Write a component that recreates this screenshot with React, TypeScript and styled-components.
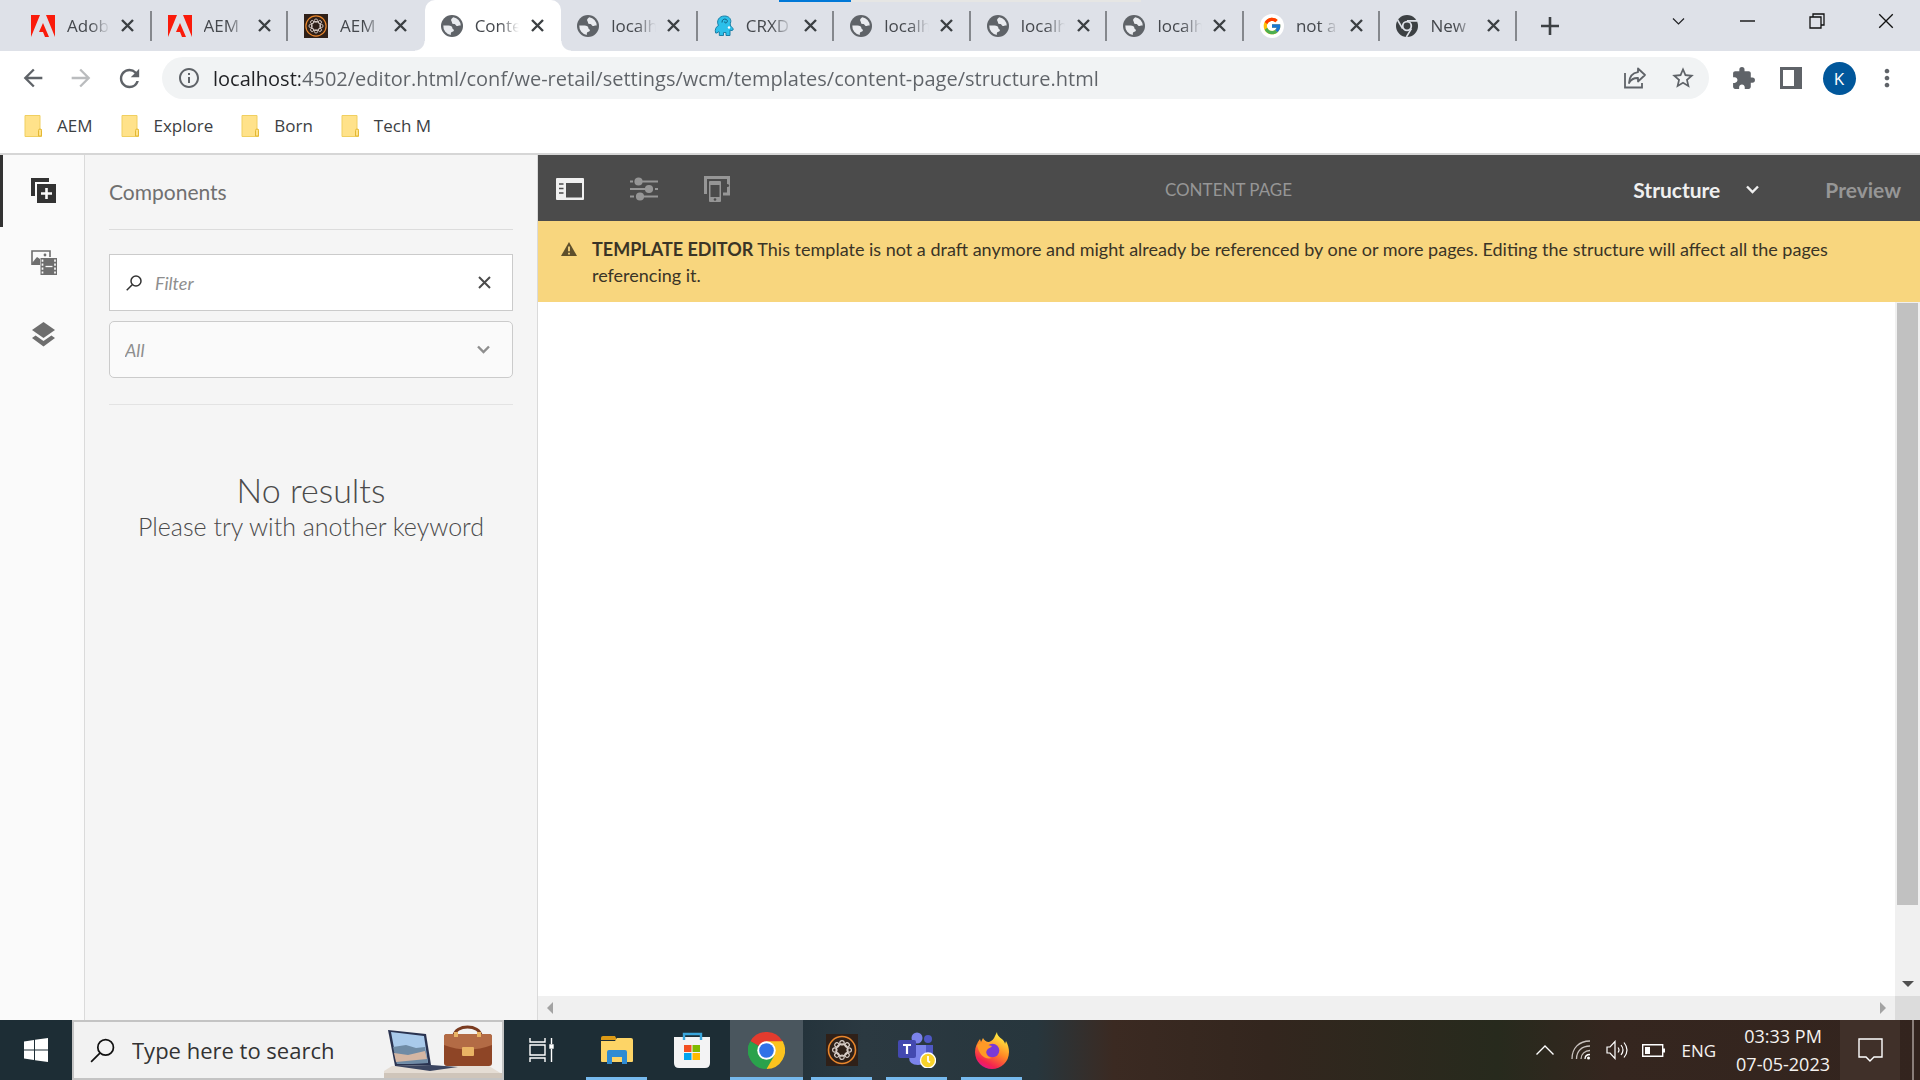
import React from "react";
import styled, { createGlobalStyle, css } from "styled-components";
import { MdExtension, MdMoreVert, MdStarOutline, MdInfoOutline, MdRefresh, MdArrowBack, MdArrowForward } from "react-icons/md";
import { FcGoogle } from "react-icons/fc";

const uiFont = `"Open Sans", "Noto Sans", sans-serif`;
const pageFont = `Lato, "Open Sans", sans-serif`;

const GlobalStyle = createGlobalStyle`
  *, *::before, *::after { box-sizing: border-box; }
  body { margin: 0; font-family: ${uiFont}; background: #fff; }
  button, input, select { font: inherit; color: inherit; margin: 0; }
  button { padding: 0; border: 0; background: none; cursor: pointer; }
  input:focus, select:focus { outline: none; }
  svg { display: block; flex: none; }
`;

const Screen = styled.div`
  display: flex;
  flex-direction: column;
  height: 100vh;
  overflow: hidden;
`;

/* ---------- Browser chrome ---------- */

const TabStrip = styled.header`
  position: relative;
  display: flex;
  flex: none;
  height: 51px;
  padding-left: 15px;
  background: #dee1e8;
`;

const LoadBar = styled.div`
  position: absolute;
  top: 0;
  left: 779px;
  width: 362px;
  height: 2px;
  background: linear-gradient(to right, #0078d7 72px, #e6e6e4 72px);
`;

const TabList = styled.nav`
  display: flex;
  flex: 0 1 1502px;
  min-width: 0;
`;

const Tab = styled.div<{ $active?: boolean; $divider?: boolean }>`
  position: relative;
  display: flex;
  flex: 1 1 0;
  align-items: center;
  min-width: 0;
  padding: 0 12px 0 16px;
  color: #45484d;
  ${(p) =>
    p.$divider &&
    css`
      background: linear-gradient(#85888d, #85888d) right center / 2px 30px no-repeat;
    `}
  ${(p) =>
    p.$active &&
    css`
      background: #fff;
      border-radius: 10px 10px 0 0;
      &::before,
      &::after {
        content: "";
        position: absolute;
        bottom: 0;
        width: 10px;
        height: 10px;
      }
      &::before {
        right: 100%;
        background: radial-gradient(circle at 0 0, transparent 9px, #fff 10px);
      }
      &::after {
        left: 100%;
        background: radial-gradient(circle at 100% 0, transparent 9px, #fff 10px);
      }
    `}
`;

const TabButton = styled.button`
  display: flex;
  flex: 1;
  align-items: center;
  gap: 12px;
  min-width: 0;
  text-align: left;
`;

const TabTitle = styled.span`
  flex: 1;
  overflow: hidden;
  font-size: 17px;
  line-height: 24px;
  white-space: nowrap;
  mask-image: linear-gradient(to right, #000 55%, transparent 100%);
`;

const CloseTab = styled.button`
  display: flex;
  align-items: center;
  justify-content: center;
  width: 24px;
  height: 24px;
  margin-left: 6px;
`;

const NewTab = styled.button`
  display: flex;
  align-items: center;
  justify-content: center;
  width: 66px;
`;

const WindowButtons = styled.div`
  display: flex;
  margin-left: auto;
  height: 42px;
`;

const WindowButton = styled.button`
  display: flex;
  align-items: center;
  justify-content: center;
  width: 69px;
`;

const AddressRow = styled.div`
  display: flex;
  flex: none;
  align-items: center;
  height: 54px;
  padding: 0 9px;
  color: #5f6368;
`;

const NavButton = styled.button`
  display: flex;
  align-items: center;
  justify-content: center;
  width: 48px;
  height: 42px;
  color: #5f6368;
  &:disabled {
    color: #babcbe;
  }
`;

const AddressBar = styled.form`
  display: flex;
  flex: 1;
  align-items: center;
  height: 42px;
  margin: 0 10px 0 9px;
  padding: 0 2px 0 15px;
  border-radius: 21px;
  background: #f1f3f4;
`;

const AddressInput = styled.input`
  flex: 1;
  min-width: 0;
  height: 34px;
  padding: 0;
  border: 0;
  margin-left: 12px;
  font-size: 20px;
  background: linear-gradient(to right, #202124 87px, #5f6368 87px);
  background-clip: text;
  -webkit-text-fill-color: transparent;
`;

const Avatar = styled.span`
  display: flex;
  align-items: center;
  justify-content: center;
  width: 33px;
  height: 33px;
  border-radius: 50%;
  background: #01579b;
  color: #fff;
  font-size: 17px;
`;

const Bookmarks = styled.nav`
  display: flex;
  flex: none;
  align-items: center;
  gap: 28px;
  height: 50px;
  padding: 0 24px 6px;
  border-bottom: 2px solid #d6d6d6;
`;

const Bookmark = styled.a`
  display: flex;
  align-items: center;
  gap: 15px;
  color: #3c4043;
  font-size: 17px;
  line-height: 24px;
  text-decoration: none;
`;

/* ---------- Template editor ---------- */

const Editor = styled.main`
  display: flex;
  flex: 1;
  min-height: 0;
  font-family: ${pageFont};
`;

const Rail = styled.nav`
  display: flex;
  flex: none;
  flex-direction: column;
  width: 85px;
  border-right: 1px solid #dadada;
  background: #fafafa;
`;

const RailButton = styled.button<{ $active?: boolean }>`
  display: flex;
  align-items: center;
  justify-content: center;
  height: 72px;
  padding-bottom: 2px;
  border-left: 3px solid ${(p) => (p.$active ? "#323232" : "transparent")};
  color: ${(p) => (p.$active ? "#323232" : "#6e6e6e")};
`;

const SidePanel = styled.aside`
  flex: none;
  width: 453px;
  padding: 0 24px;
  border-right: 1px solid #dadada;
  background: #f5f5f5;
`;

const PanelTitle = styled.h1`
  margin: 0 0 24px;
  border-bottom: 1px solid #dcdcdc;
  color: #707070;
  font-size: 21px;
  font-weight: 400;
  line-height: 74px;
`;

const FilterBox = styled.label`
  display: flex;
  align-items: center;
  height: 57px;
  padding: 0 16px;
  border: 1px solid #cbcbcb;
  background: #fff;
`;

const FilterInput = styled.input`
  flex: 1;
  min-width: 0;
  height: 40px;
  padding: 0;
  border: 0;
  margin-left: 13px;
  background: none;
  font-size: 18px;
  &::placeholder {
    color: #8e8e8e;
    font-style: italic;
    opacity: 1;
  }
`;

const ClearButton = styled.button`
  display: flex;
  align-items: center;
  justify-content: center;
  width: 24px;
  height: 24px;
`;

const SelectBox = styled.label`
  display: flex;
  align-items: center;
  height: 57px;
  margin: 10px 0 26px;
  padding-right: 17px;
  border: 1px solid #cbcbcb;
  border-radius: 5px;
  background: #fafafa;
`;

const GroupSelect = styled.select`
  flex: 1;
  height: 100%;
  padding: 0 0 0 15px;
  border: 0;
  appearance: none;
  background: none;
  color: #8e8e8e;
  font-size: 18px;
  font-style: italic;
`;

const Results = styled.section`
  padding-top: 63px;
  border-top: 1px solid #e3e3e3;
  color: #4b4b4b;
  font-weight: 300;
  text-align: center;
`;

const ResultsTitle = styled.h2`
  margin: 0;
  font-size: 34px;
  font-weight: 300;
  line-height: 44px;
`;

const ResultsHint = styled.p`
  margin: 0;
  font-size: 25px;
  line-height: 28px;
`;

const Workspace = styled.section`
  display: flex;
  flex: 1;
  flex-direction: column;
  min-width: 0;
`;

const EditorBar = styled.div`
  display: grid;
  flex: none;
  grid-template-columns: 1fr auto 1fr;
  align-items: center;
  height: 66px;
  padding: 2px 19px 0 18px;
  background: #4b4b4b;
`;

const BarGroup = styled.div<{ $end?: boolean }>`
  display: flex;
  align-items: center;
  justify-content: ${(p) => (p.$end ? "flex-end" : "flex-start")};
  gap: ${(p) => (p.$end ? "66px" : "46px")};
`;

const BarButton = styled.button<{ $active?: boolean }>`
  display: flex;
  align-items: center;
  gap: 26px;
  color: ${(p) => (p.$active ? "#f0f0f0" : "#969696")};
  font-size: 21px;
  font-weight: 700;
`;

const PageTitle = styled.div`
  color: #969696;
  font-size: 17px;
`;

const Notice = styled.div`
  display: flex;
  flex: none;
  gap: 15px;
  padding: 15px 80px 14px 23px;
  background: #f8d67e;
  color: #3a3426;
`;

const NoticeIcon = styled.span`
  display: flex;
  align-items: center;
  height: 26px;
`;

const NoticeText = styled.p`
  margin: 0;
  font-size: 18px;
  line-height: 26px;
`;

const Canvas = styled.div`
  display: grid;
  flex: 1;
  grid-template: 1fr 24px / 1fr 25px;
  min-height: 0;
  background: #fff;
`;

const VerticalTrack = styled.div`
  display: flex;
  flex-direction: column;
  grid-column: 2;
  align-items: center;
  padding: 1px 2px 0;
  background: #f0f0f0;
`;

const VerticalRange = styled.div`
  flex: 1;
  width: 100%;
`;

const Thumb = styled.div`
  height: 90%;
  background: #c1c1c1;
`;

const ScrollButton = styled.button`
  display: flex;
  align-items: center;
  justify-content: center;
  width: 24px;
  height: 24px;
`;

const HorizontalTrack = styled.div`
  display: flex;
  grid-column: 1;
  justify-content: space-between;
  background: #f0f0f0;
`;

const Corner = styled.div`
  background: #dcdcdc;
`;

/* ---------- Taskbar ---------- */

const Taskbar = styled.footer`
  display: flex;
  flex: none;
  height: 60px;
  background: linear-gradient(
    to right,
    #1d2d35 0%,
    #1d2d35 38%,
    #2b3941 45%,
    #27363d 54%,
    #3b2a22 58%,
    #33261e 66%,
    #272a1d 78%,
    #35261f 84%,
    #33241e 100%
  );
  color: #f5f2f0;
`;

const StartButton = styled.button`
  display: flex;
  align-items: center;
  justify-content: center;
  width: 72px;
`;

const SearchBox = styled.label`
  display: flex;
  align-items: center;
  width: 432px;
  padding-left: 16px;
  border: 2px solid #c4c4c4;
  background: #f2f2f2;
`;

const SearchInput = styled.input`
  flex: 1;
  min-width: 0;
  height: 40px;
  padding: 0;
  border: 0;
  margin-left: 17px;
  background: none;
  font-size: 22px;
  &::placeholder {
    color: #333;
    opacity: 1;
  }
`;

const AppButton = styled.button<{ $state?: "open" | "active" }>`
  display: flex;
  align-items: center;
  justify-content: center;
  width: 75px;
  padding: 0;
  background: ${(p) =>
    p.$state === "active"
      ? "linear-gradient(#76b9ed, #76b9ed) center bottom / 73px 3px no-repeat, linear-gradient(#4a565e, #4a565e) center / 73px 100% no-repeat"
      : p.$state === "open"
        ? "linear-gradient(#76b9ed, #76b9ed) center bottom / 61px 3px no-repeat"
        : "none"};
`;

const Tray = styled.div`
  display: flex;
  align-items: center;
  margin-left: auto;
`;

const TrayButton = styled.button`
  display: flex;
  align-items: center;
  justify-content: center;
  width: 36px;
  height: 60px;
`;

const Language = styled.button`
  margin: 0 20px 0 10px;
  font-size: 17px;
`;

const Clock = styled.button`
  margin-right: 10px;
  font-size: 18px;
  line-height: 28px;
  text-align: center;
  white-space: pre-line;
`;

const NoticeCenter = styled.button`
  display: flex;
  align-items: center;
  justify-content: center;
  width: 60px;
  height: 60px;
  background: #403029;
`;

const ShowDesktop = styled.button`
  width: 8px;
  height: 60px;
  margin-left: 12px;
  border-left: 2px solid #8a7e79;
`;

/* ---------- Icons ---------- */

const Cross = ({ size = 13, color = "#3c4043", width = 2.4 }) => (
  <svg width={size} height={size} viewBox="0 0 13 13" aria-hidden>
    <path d="M1 1 12 12M12 1 1 12" stroke={color} strokeWidth={width} fill="none" />
  </svg>
);

const AdobeIcon = () => (
  <svg width="24" height="22" viewBox="0 0 24 22" aria-hidden>
    <path d="M0 0h9L0 22zM15 0h9v22zM12 8l6 14h-4l-2-5H8z" fill="#fa1b0b" />
  </svg>
);

const AemIcon = ({ size = 24 }) => (
  <svg width={size} height={size} viewBox="0 0 32 32" aria-hidden>
    <rect width="32" height="32" fill="#2f2018" />
    <circle cx="16" cy="16" r="13.5" fill="none" stroke="#e8862c" strokeWidth="1.6" />
    <circle cx="16" cy="16" r="6" fill="none" stroke="#d9cec8" strokeWidth="1.3" />
    {[0, 45, 90, 135, 180, 225, 270, 315].map((a) => (
      <circle key={a} cx="16" cy="8.8" r="2.2" fill="none" stroke="#d9cec8" strokeWidth="1.2" transform={`rotate(${a} 16 16)`} />
    ))}
  </svg>
);

const GlobeIcon = () => (
  <svg width="22" height="22" viewBox="0 0 22 22" aria-hidden>
    <circle cx="11" cy="11" r="11" fill="#5f6368" />
    <path
      d="M12.4 2.2c-1 .7-2.3 1.5-2.3 2.9 0 1.3 1.1 1.5.9 2.6-.2 1.300 1.500 1 2.600 1.300 1.200.3 1 2 2.400 2 1.200 0 2-.9 3.700-.5a8.800 8.800 0 0 0-7.300-8.300z"
      fill="#e9ebef"
    />
    <path
      d="M2.300 10.500h5.200c2.400 0 3.900 1 3.900 2.800 0 1.200 1.500.6 1.500 1.900 0 1.700-2.700 1.300-3 2.700-.2.800-.1 1.600 0 2A8.900 8.900 0 0 1 2.300 10.500z"
      fill="#e9ebef"
    />
  </svg>
);

const CrxIcon = () => (
  <svg width="20" height="22" viewBox="0 0 20 22" aria-hidden>
    <path
      d="M4.500 10.500C2 6 5 1 10.500 1c4 0 6.500 2.500 6.300 5.500-.1 1.500-.8 2.300-.5 3.500.5 1.800 2.900 2.800 2.900 4.300 0 1.200-2 1.700-3.200.7v5.500h-4v-3H9.500v3H5.300V17l-1.300-.2-.8 1.200H1.600c-1-3.500.4-6.300 2.900-7.500z"
      fill="#2cc0ea"
      stroke="#1a7fa6"
      strokeWidth="1"
    />
    <path d="M8 7.500C7.800 4.800 10 3.500 12 4.300c2 .9 1.600 3.600-.4 3.600-1.100 0-1.300-1.300-.4-1.700" stroke="#135f80" strokeWidth="1" fill="none" />
    <circle cx="15" cy="12.500" r="1.200" fill="#fff" />
  </svg>
);

const GoogleIcon = () => (
  <svg width="24" height="24" viewBox="0 0 24 24" aria-hidden>
    <circle cx="12" cy="12" r="12" fill="#fff" />
    <FcGoogle x={2} y={2} size={20} />
  </svg>
);

const ChromeMono = () => (
  <svg width="22" height="22" viewBox="0 0 22 22" aria-hidden>
    <circle cx="11" cy="11" r="11" fill="#3c4043" />
    <circle cx="11" cy="11" r="4.300" fill="#3c4043" stroke="#dee1e8" strokeWidth="1.800" />
    <path d="M11 5.900h10M6.600 13.600 1.600 5M15.400 13.600l-5 8.400" stroke="#dee1e8" strokeWidth="1.600" />
  </svg>
);

const ChromeIcon = () => (
  <svg width="37" height="37" viewBox="0 0 48 48" aria-hidden>
    <path d="M24 24 3.200 12A24 24 0 0 1 44.800 12z" fill="#e33b2e" />
    <path d="M24 24 44.800 12A24 24 0 0 1 24 48z" fill="#fcc31e" />
    <path d="M24 24v24A24 24 0 0 1 3.200 12z" fill="#2aa24c" />
    <path d="M24 12h20.800L46 14 34 30 24 48l0-12z" fill="#fcc31e" />
    <path d="M3.200 12 13.600 30l10 6 .4 12A24 24 0 0 1 3.200 12z" fill="#2aa24c" />
    <path d="m34.400 30-10.400 18-5-12z" fill="#2aa24c" />
    <circle cx="24" cy="24" r="12" fill="#fff" />
    <circle cx="24" cy="24" r="9.500" fill="#2f72e8" />
  </svg>
);

const FolderIcon = () => (
  <svg width="18" height="22" viewBox="0 0 18 22" aria-hidden>
    <path d="M1 .5h15v14h1.500v7H1z" fill="#ffe28a" stroke="#f0cf60" />
    <path d="M14.500 21v-5.500q0-1.500 1.500-1.500t1.500 1.500V21z" fill="#ffe28a" stroke="#e3b834" />
  </svg>
);

const ShareIcon = () => (
  <svg width="24" height="24" viewBox="0 0 24 24" fill="none" stroke="#5f6368" strokeWidth="1.800" aria-hidden>
    <path d="M2 7v14.500h17V17" />
    <path d="M15 2.500 22 9l-7 6.500V12c-4.500-.2-7 1.300-9 5 .3-6 3.500-10 9-10.800z" strokeLinejoin="round" />
  </svg>
);

const ComponentsIcon = () => (
  <svg width="25" height="25" viewBox="0 0 25 25" aria-hidden>
    <path d="M0 0h18v4H4v14H0z" fill="currentColor" />
    <path d="M6 6h19v19H6z" fill="currentColor" />
    <path d="M15.500 10v11M10 15.500h11" stroke="#fafafa" strokeWidth="2.600" />
  </svg>
);

const AssetsIcon = () => (
  <svg width="26" height="25" viewBox="0 0 26 25" aria-hidden>
    <path d="M1 15V1h18v6" stroke="currentColor" strokeWidth="1.600" fill="none" />
    <path d="m1 13 5-6 3 2v6H1z" fill="currentColor" />
    <circle cx="14" cy="5" r="1.400" fill="currentColor" />
    <path d="M9.500 8H26v17H9.500z" fill="currentColor" />
    <path d="M11.500 9.500v14M24 9.500v14" stroke="#fafafa" strokeWidth="1.700" strokeDasharray="2.200 1.800" />
    <path d="M14.500 16.500h7" stroke="#fafafa" strokeWidth="1.300" />
  </svg>
);

const LayersIcon = () => (
  <svg width="23" height="25" viewBox="0 0 23 25" fill="currentColor" aria-hidden>
    <path d="m11.500 0 11.500 8-11.500 8L0 8z" />
    <path d="m3.600 13.500 7.900 5.500 7.900-5.500L23 16l-11.500 8.500L0 16z" />
  </svg>
);

const Lens = ({ size = 16, color = "#323232", width = 1.500 }) => (
  <svg width={size} height={size} viewBox="0 0 16 16" fill="none" stroke={color} strokeWidth={width} aria-hidden>
    <circle cx="10" cy="6" r="5" />
    <path d="M6.500 9.500.7 15.300" />
  </svg>
);

const Chevron = ({ width = 13, stroke = 2.400, color = "currentColor" }) => (
  <svg width={width} height="9" viewBox="0 0 13 9" fill="none" stroke={color} strokeWidth={stroke} aria-hidden>
    <path d="M1 1.500 6.500 7 12 1.500" />
  </svg>
);

const PanelIcon = () => (
  <svg width="28" height="22" viewBox="0 0 28 22" aria-hidden>
    <rect width="28" height="22" rx="1" fill="#f0f0f0" />
    <path d="M10 5h16v14.500H10z" fill="#4b4b4b" />
    <path d="M3 6h4.500M3 10.500h4.500M3 15h4.500" stroke="#4b4b4b" strokeWidth="1.500" />
  </svg>
);

const SlidersIcon = () => (
  <svg width="28" height="24" viewBox="0 0 28 24" stroke="#969696" strokeWidth="1.800" fill="#969696" aria-hidden>
    <path d="M0 4.500h3M8 4.500h20M0 12h19M25 12h3M0 19.500h4M10 19.500h18" />
    <circle cx="8.500" cy="4.500" r="3.200" />
    <circle cx="19" cy="12" r="3.200" />
    <circle cx="10" cy="19.500" r="3.200" />
  </svg>
);

const DevicesIcon = () => (
  <svg width="26" height="26" viewBox="0 0 26 26" aria-hidden>
    <path d="M1.500 18V1.500h23V18H19" stroke="#969696" strokeWidth="3" fill="none" />
    <path d="M5 6q0-1 1-1h10q1 0 1 1v19q0 1-1 1H6q-1 0-1-1z" fill="#969696" />
    <path d="M6.500 9h9v12h-9z" fill="#4b4b4b" />
    <circle cx="11" cy="23.500" r="1.300" fill="#4b4b4b" />
    <circle cx="23.500" cy="9.500" r="1.600" fill="#4b4b4b" />
  </svg>
);

const AlertIcon = () => (
  <svg width="16" height="14" viewBox="0 0 16 14" aria-hidden>
    <path d="M8 0 16 14H0z" fill="#5e4f2b" />
    <path d="M8 4.500v4.700M8 10.700v1.700" stroke="#f8d67e" strokeWidth="1.800" />
  </svg>
);

const WindowsIcon = () => (
  <svg width="24" height="24" viewBox="0 0 24 24" fill="#fff" aria-hidden>
    <path d="M0 3.400 10 2v9.500H0zM11 1.800 24 0v11.500H11zM0 12.500h10V22L0 20.600zM11 12.500h13V24l-13-1.800z" />
  </svg>
);

const LaptopCaseArt = () => (
  <svg width="118" height="56" viewBox="0 0 118 56" aria-hidden>
    <path d="M8 44h97l13 8v4H0V49z" fill="#e5ddd4" />
    <path d="M0 51h118v5H0z" fill="#cfc5ba" />
    <path d="m4 8 38 4 5 31-36 1z" fill="#2a3350" />
    <path d="m7 10 33 4 4 27-31 1z" fill="#a9caeb" />
    <path d="m9 25 13-2 10 3 9-1 3 16-31 1z" fill="#6f8ba5" />
    <path d="m10 31 14 2 17-4 2 8-31 3z" fill="#d4b6a3" />
    <path d="m11 44 36-1 27 2-28 4z" fill="#3b4560" />
    <path d="M70 14c1-12 26-12 27 0" stroke="#7a3b20" strokeWidth="3" fill="none" />
    <rect x="60" y="12" width="48" height="32" rx="3" fill="#8e4526" />
    <path d="M60 15q0-3 3-3h42q3 0 3 3v8q-24 9-48 0z" fill="#b36b45" />
    <rect x="78" y="25" width="12" height="9" rx="1" fill="#e9b364" />
    <path d="M70 10h4v5h-4zM93 10h4v5h-4z" fill="#e9b364" />
  </svg>
);

const TaskViewIcon = () => (
  <svg width="25" height="24" viewBox="0 0 25 24" fill="none" stroke="#fff" strokeWidth="1.400" aria-hidden>
    <path d="M1 0v4h15V0M1 24v-4h15v4M1 7h15v10H1zM22.500 0v6M22.500 11v13" />
    <path d="M21 7h3v3h-3z" fill="#fff" />
  </svg>
);

const ExplorerIcon = () => (
  <svg width="32" height="28" viewBox="0 0 32 28" aria-hidden>
    <path d="M0 2q0-2 2-2h12l2 4H0z" fill="#dc9a16" />
    <path d="M0 5h14l2-3h14q2 0 2 2v21q0 1-1 1H1q-1 0-1-1z" fill="#fdd466" />
    <path d="M6 28V16q0-2 2-2h16q2 0 2 2v12h-5v-7H11v7z" fill="#2f8bd3" />
  </svg>
);

const StoreIcon = () => (
  <svg width="36" height="36" viewBox="0 0 36 36" aria-hidden>
    <path d="M10 8V2h17v6" stroke="#3aa6dc" strokeWidth="2.400" fill="none" />
    <path d="M0 5h36v26q0 5-5 5H5q-5 0-5-5z" fill="#f3f3f4" />
    <path d="M10 5v3M27 5v3" stroke="#3aa6dc" strokeWidth="2.400" />
    <path d="M10 13h7.500v7H10z" fill="#f25022" />
    <path d="M18.500 13H26v7h-7.500z" fill="#7fba00" />
    <path d="M10 21h7.500v7H10z" fill="#00a4ef" />
    <path d="M18.500 21H26v7h-7.500z" fill="#ffb900" />
  </svg>
);

const TeamsIcon = () => (
  <svg width="38" height="36" viewBox="0 0 38 36" aria-hidden>
    <circle cx="30" cy="7" r="4" fill="#4f58c4" />
    <circle cx="19" cy="6" r="5.500" fill="#7b83eb" />
    <path d="M25 13h10v10q0 5-5 6h-5z" fill="#4f58c4" />
    <path d="M11 13h17v12q0 8-8 8-9 0-9-8z" fill="#7b83eb" />
    <rect y="8" width="18" height="18" rx="2" fill="#4349b0" />
    <path d="M5 13h8M9 13v9" stroke="#fff" strokeWidth="2.200" />
    <circle cx="30" cy="28.500" r="7.500" fill="#f8d22a" stroke="#fff" strokeWidth="1.300" />
    <path d="M30 24v5l2 1.500" stroke="#fff" strokeWidth="1.800" fill="none" />
  </svg>
);

const FirefoxIcon = () => (
  <svg width="34" height="37" viewBox="0 0 34 37" aria-hidden>
    <defs>
      <linearGradient id="flame" x1="0.800" y1="0" x2="0.300" y2="1">
        <stop offset="0.100" stopColor="#ffe83f" />
        <stop offset="0.500" stopColor="#ff8a25" />
        <stop offset="0.850" stopColor="#f5234f" />
        <stop offset="1" stopColor="#e3168b" />
      </linearGradient>
    </defs>
    <path d="M22 0c0 4 4 6 6 8 1 1 2 3 2 4l1-3c2 4 3 7 3 11 0 10-8 17-17 17S0 30 0 20c0-5 2-9 5-13l1 3 2-4c1 2 3 4 6 4 3-1 5-3 6-6z" fill="url(#flame)" />
    <circle cx="17.500" cy="18.500" r="6.800" fill="#7a3ad6" />
    <path d="M2 13c4-3 9-2 11 0l4 1c-1 2-4 2-5 4-2 3 0 7 5 8-8 2-13-4-15-13z" fill="#ff9a26" />
  </svg>
);

const WifiIcon = () => (
  <svg width="20" height="20" viewBox="0 0 20 20" fill="none" strokeWidth="1.300" aria-hidden>
    <path d="M1 19C1 8 8 1 19 1" stroke="#c9c3bf" />
    <path d="M5.500 19C5.500 11 11 6 19 6M10 19c0-5 4-8.500 9-8.500" stroke="#c9c3bf" />
    <path d="M14 19c0-3 2-4.500 5-4.500" stroke="#fff" />
    <circle cx="17.500" cy="18" r="1.500" fill="#fff" />
  </svg>
);

const VolumeIcon = () => (
  <svg width="23" height="20" viewBox="0 0 23 20" fill="none" stroke="#fff" strokeWidth="1.200" aria-hidden>
    <path d="M1 7h3l5-5.500v17L4 13H1z" />
    <path d="M12 7.500q2 2.500 0 5M15 5q4 5 0 10M18 2.500q6 7.500 0 15" />
  </svg>
);

const BatteryIcon = () => (
  <svg width="23" height="13" viewBox="0 0 23 13" aria-hidden>
    <path d="M.7.700h20v11.600H.700z" fill="none" stroke="#fff" strokeWidth="1.400" />
    <path d="M3 3h5v7H3zM21 4.500h2v4h-2z" fill="#fff" />
  </svg>
);

const BubbleIcon = () => (
  <svg width="25" height="25" viewBox="0 0 25 25" fill="none" stroke="#fff" strokeWidth="1.400" aria-hidden>
    <path d="M1 1h23v18h-8l-4 4-4-4H1z" />
  </svg>
);

const Arrow = ({ d, color }: { d: string; color: string }) => (
  <svg width="12" height="12" viewBox="0 0 12 12" aria-hidden>
    <path d={d} fill={color} />
  </svg>
);

/* ---------- Data ---------- */

const tabs = [
  { title: "Adobe", icon: <AdobeIcon />, divider: true },
  { title: "AEM", icon: <AdobeIcon />, divider: true },
  { title: "AEM", icon: <AemIcon />, divider: false },
  { title: "Conte", icon: <GlobeIcon />, active: true },
  { title: "localh", icon: <GlobeIcon />, divider: true },
  { title: "CRXD", icon: <CrxIcon />, divider: true },
  { title: "localh", icon: <GlobeIcon />, divider: true },
  { title: "localh", icon: <GlobeIcon />, divider: true },
  { title: "localh", icon: <GlobeIcon />, divider: true },
  { title: "not a", icon: <GoogleIcon />, divider: true },
  { title: "New", icon: <ChromeMono />, divider: true },
];

const apps: { name: string; icon: React.ReactNode; state?: "open" | "active" }[] = [
  { name: "File Explorer", icon: <ExplorerIcon />, state: "open" },
  { name: "Microsoft Store", icon: <StoreIcon /> },
  { name: "Google Chrome", icon: <ChromeIcon />, state: "active" },
  { name: "AEM", icon: <AemIcon size={32} />, state: "open" },
  { name: "Teams", icon: <TeamsIcon />, state: "open" },
  { name: "Firefox", icon: <FirefoxIcon />, state: "open" },
];

export default function App() {
  return (
    <Screen>
      <GlobalStyle />
      <TabStrip>
        <TabList aria-label="Tabs">
          {tabs.map((tab, i) => (
            <Tab key={i} $active={tab.active} $divider={tab.divider}>
              <TabButton>
                {tab.icon}
                <TabTitle>{tab.title}</TabTitle>
              </TabButton>
              <CloseTab aria-label="Close tab">
                <Cross />
              </CloseTab>
            </Tab>
          ))}
        </TabList>
        <NewTab aria-label="New tab">
          <svg width="18" height="18" viewBox="0 0 18 18" aria-hidden>
            <path d="M9 0v18M0 9h18" stroke="#3c4043" strokeWidth="2.600" />
          </svg>
        </NewTab>
        <WindowButtons>
          <WindowButton aria-label="Search tabs">
            <Chevron width={15} stroke={1.200} color="#202124" />
          </WindowButton>
          <WindowButton aria-label="Minimize">
            <svg width="15" height="2" aria-hidden>
              <path d="M0 1h15" stroke="#111" strokeWidth="1.400" />
            </svg>
          </WindowButton>
          <WindowButton aria-label="Restore">
            <svg width="16" height="16" viewBox="0 0 16 16" fill="none" stroke="#111" strokeWidth="1.300" aria-hidden>
              <path d="M1 4h11v11H1zM4 4V1h11v11h-3" />
            </svg>
          </WindowButton>
          <WindowButton aria-label="Close">
            <Cross size={16} color="#111" width={1.100} />
          </WindowButton>
        </WindowButtons>
        <LoadBar />
      </TabStrip>

      <AddressRow>
        <NavButton aria-label="Back">
          <MdArrowBack size={28} />
        </NavButton>
        <NavButton aria-label="Forward" disabled>
          <MdArrowForward size={28} />
        </NavButton>
        <NavButton aria-label="Reload">
          <MdRefresh size={29} />
        </NavButton>
        <AddressBar>
          <MdInfoOutline size={24} />
          <AddressInput
            aria-label="Address"
            defaultValue="localhost:4502/editor.html/conf/we-retail/settings/wcm/templates/content-page/structure.html"
          />
          <NavButton type="button" aria-label="Share">
            <ShareIcon />
          </NavButton>
          <NavButton type="button" aria-label="Bookmark this page">
            <MdStarOutline size={26} />
          </NavButton>
        </AddressBar>
        <NavButton aria-label="Extensions">
          <MdExtension size={25} />
        </NavButton>
        <NavButton aria-label="Side panel">
          <svg width="22" height="22" viewBox="0 0 22 22" aria-hidden>
            <path d="M1.500 1.500h19v19h-19z" fill="none" stroke="#5f6368" strokeWidth="3" />
            <path d="M14 0h8v22h-8z" fill="#5f6368" />
          </svg>
        </NavButton>
        <NavButton aria-label="Profile">
          <Avatar>K</Avatar>
        </NavButton>
        <NavButton aria-label="Menu">
          <MdMoreVert size={28} />
        </NavButton>
      </AddressRow>

      <Bookmarks aria-label="Bookmarks">
        {["AEM", "Explore", "Born", "Tech M"].map((name) => (
          <Bookmark key={name} href="#">
            <FolderIcon />
            {name}
          </Bookmark>
        ))}
      </Bookmarks>

      <Editor>
        <Rail aria-label="Side panel sections">
          <RailButton $active aria-label="Components">
            <ComponentsIcon />
          </RailButton>
          <RailButton aria-label="Assets">
            <AssetsIcon />
          </RailButton>
          <RailButton aria-label="Structure tree">
            <LayersIcon />
          </RailButton>
        </Rail>

        <SidePanel>
          <PanelTitle>Components</PanelTitle>
          <FilterBox>
            <Lens />
            <FilterInput placeholder="Filter" aria-label="Filter" />
            <ClearButton aria-label="Clear filter">
              <Cross color="#4b4b4b" width={2} />
            </ClearButton>
          </FilterBox>
          <SelectBox>
            <GroupSelect aria-label="Group">
              <option>All</option>
            </GroupSelect>
            <ClearButton as="span">
              <Chevron color="#8e8e8e" />
            </ClearButton>
          </SelectBox>
          <Results>
            <ResultsTitle>No results</ResultsTitle>
            <ResultsHint>Please try with another keyword</ResultsHint>
          </Results>
        </SidePanel>

        <Workspace>
          <EditorBar>
            <BarGroup>
              <BarButton $active aria-label="Toggle side panel">
                <PanelIcon />
              </BarButton>
              <BarButton aria-label="Page information">
                <SlidersIcon />
              </BarButton>
              <BarButton aria-label="Emulator">
                <DevicesIcon />
              </BarButton>
            </BarGroup>
            <PageTitle>CONTENT PAGE</PageTitle>
            <BarGroup $end>
              <BarButton $active>
                Structure
                <Chevron />
              </BarButton>
              <BarButton>Preview</BarButton>
            </BarGroup>
          </EditorBar>
          <Notice role="alert">
            <NoticeIcon>
              <AlertIcon />
            </NoticeIcon>
            <NoticeText>
              <strong>TEMPLATE EDITOR</strong> This template is not a draft anymore and might already be referenced by one or more pages.
              Editing the structure will affect all the pages referencing it.
            </NoticeText>
          </Notice>
          <Canvas>
            <div />
            <VerticalTrack>
              <VerticalRange>
                <Thumb />
              </VerticalRange>
              <ScrollButton aria-label="Scroll down">
                <Arrow d="M0 3h12L6 9z" color="#505050" />
              </ScrollButton>
            </VerticalTrack>
            <HorizontalTrack>
              <ScrollButton aria-label="Scroll left">
                <Arrow d="M9 0v12L3 6z" color="#a3a3a3" />
              </ScrollButton>
              <ScrollButton aria-label="Scroll right">
                <Arrow d="M3 0v12l6-6z" color="#a3a3a3" />
              </ScrollButton>
            </HorizontalTrack>
            <Corner />
          </Canvas>
        </Workspace>
      </Editor>

      <Taskbar>
        <StartButton aria-label="Start">
          <WindowsIcon />
        </StartButton>
        <SearchBox>
          <Lens size={25} color="#111" width={1.100} />
          <SearchInput placeholder="Type here to search" aria-label="Type here to search" />
          <LaptopCaseArt />
        </SearchBox>
        <AppButton aria-label="Task view">
          <TaskViewIcon />
        </AppButton>
        {apps.map((app) => (
          <AppButton key={app.name} $state={app.state} aria-label={app.name}>
            {app.icon}
          </AppButton>
        ))}
        <Tray>
          <TrayButton aria-label="Show hidden icons">
            <svg width="18" height="10" viewBox="0 0 18 10" fill="none" stroke="#fff" strokeWidth="1.400" aria-hidden>
              <path d="M.5 9.500 9 1l8.500 8.500" />
            </svg>
          </TrayButton>
          <TrayButton aria-label="Network">
            <WifiIcon />
          </TrayButton>
          <TrayButton aria-label="Volume">
            <VolumeIcon />
          </TrayButton>
          <TrayButton aria-label="Battery">
            <BatteryIcon />
          </TrayButton>
          <Language>ENG</Language>
          <Clock>{"03:33 PM\n07-05-2023"}</Clock>
          <NoticeCenter aria-label="Notifications">
            <BubbleIcon />
          </NoticeCenter>
          <ShowDesktop aria-label="Show desktop" />
        </Tray>
      </Taskbar>
    </Screen>
  );
}
